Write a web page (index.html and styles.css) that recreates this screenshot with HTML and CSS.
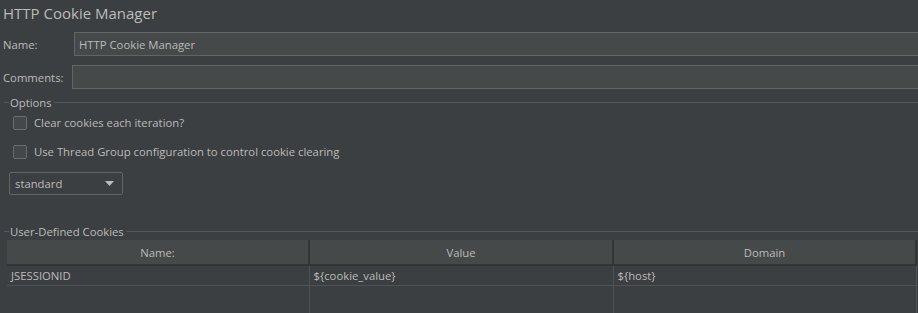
FILE: index.html
```html
<!DOCTYPE html>
<html lang="en">
<head>
  <meta charset="UTF-8">
  <title>HTTP Cookie Manager</title>
  <link rel="stylesheet" href="styles.css">
</head>
<body>
  <div class="panel">
    <h1 class="title">HTTP Cookie Manager</h1>

    <!-- name / comments -->
    <div class="field-row name-row">
      <label class="field-label">Name:</label>
      <input type="text" class="field-input" value="HTTP Cookie Manager">
    </div>
    <div class="field-row comments-row">
      <label class="field-label">Comments:</label>
      <input type="text" class="field-input" value="">
    </div>

    <!-- options group -->
    <div class="group-title">
      <span class="group-dash"></span>
      <span class="group-text">Options</span>
      <span class="group-line"></span>
    </div>
    <div class="options">
      <label class="check-row"><span class="check-box"></span>Clear cookies each iteration?</label>
      <label class="check-row"><span class="check-box"></span>Use Thread Group configuration to control cookie clearing</label>
      <div class="combo">
        <span class="combo-text">standard</span>
        <svg class="combo-arrow" width="9" height="5" viewBox="0 0 9 5"><path d="M0 0 H9 L4.5 5 Z" fill="#bbbbbb"/></svg>
      </div>
    </div>

    <!-- cookies table -->
    <div class="group-title cookies-title">
      <span class="group-dash"></span>
      <span class="group-text">User-Defined Cookies</span>
      <span class="group-line"></span>
    </div>
    <table class="cookie-table">
      <thead>
        <tr>
          <th class="col-name">Name:</th>
          <th class="col-value">Value</th>
          <th class="col-domain">Domain</th>
        </tr>
      </thead>
      <tbody>
        <tr>
          <td>JSESSIONID</td>
          <td>${cookie_value}</td>
          <td>${host}</td>
        </tr>
        <tr class="empty-row">
          <td></td>
          <td></td>
          <td></td>
        </tr>
      </tbody>
    </table>
  </div>
</body>
</html>
```

FILE: styles.css
```css
html, body {
  margin: 0;
  padding: 0;
  background-color: #3c3f41;
  overflow: hidden;
}

body {
  font-family: "Open Sans", "Noto Sans", sans-serif;
  font-size: 11.3px;
  color: #bbbbbb;
  width: 918px;
  height: 313px;
}

.panel {
  display: flex;
  flex-direction: column;
}

.title {
  margin: 0;
  padding: 0 0 0 3px;
  height: 29px;
  line-height: 27px;
  font-size: 15px;
  font-weight: normal;
  color: #bbbbbb;
}

.field-row {
  display: flex;
  align-items: center;
  height: 24px;
  padding-left: 3px;
}

.name-row {
  margin-top: 3px;
}

.comments-row {
  margin-top: 9px;
}

.field-label {
  flex: none;
}

.name-row .field-label {
  width: 71px;
}

.comments-row .field-label {
  width: 69px;
}

.field-input {
  flex: 1;
  min-width: 0;
  height: 24px;
  box-sizing: border-box;
  margin: 0;
  padding: 0 4px;
  background-color: #45494a;
  border: 1px solid #646464;
  border-right: none;
  color: #bbbbbb;
  font-family: inherit;
  font-size: 11.3px;
  outline: none;
}

.group-title {
  display: flex;
  align-items: center;
  height: 16px;
  margin-top: 5px;
  padding-left: 4px;
}

.group-dash {
  width: 5px;
  border-top: 1px solid #555859;
}

.group-text {
  padding: 0 2px 0 1px;
}

.group-line {
  flex: 1;
  border-top: 1px solid #555859;
}

.options {
  display: flex;
  flex-direction: column;
  padding-left: 9px;
}

.check-row {
  display: flex;
  align-items: center;
  height: 15px;
  margin-top: 5px;
  padding-left: 4px;
}

.check-row + .check-row {
  margin-top: 14px;
}

.check-box {
  width: 12px;
  height: 12px;
  border: 1px solid #6b6b6b;
  border-radius: 2px;
  background-color: #43494a;
  margin-right: 7px;
}

.combo {
  display: flex;
  align-items: center;
  justify-content: space-between;
  width: 114px;
  height: 23px;
  box-sizing: border-box;
  margin-top: 13px;
  padding: 0 8px 0 5px;
  border: 1px solid #646464;
  border-radius: 2px;
  background-color: #3c3f41;
}

.cookies-title {
  margin-top: 28px;
}

.cookie-table {
  margin: 1px 0 0 7px;
  width: 910px;
  border-collapse: collapse;
  table-layout: fixed;
}

.cookie-table th {
  height: 25px;
  box-sizing: border-box;
  padding: 0;
  background-color: #45494a;
  font-weight: normal;
  text-align: center;
  border-right: 2px solid #323436;
  border-bottom: 2px solid #323436;
}

.col-name {
  width: 302px;
}

.col-value {
  width: 304px;
}

.cookie-table td {
  height: 20px;
  box-sizing: border-box;
  padding: 0 4px;
  border-right: 1px solid #4e5254;
  border-bottom: 1px solid #4e5254;
  white-space: nowrap;
}

.cookie-table .empty-row td {
  height: 30px;
  border-bottom: none;
}
```
